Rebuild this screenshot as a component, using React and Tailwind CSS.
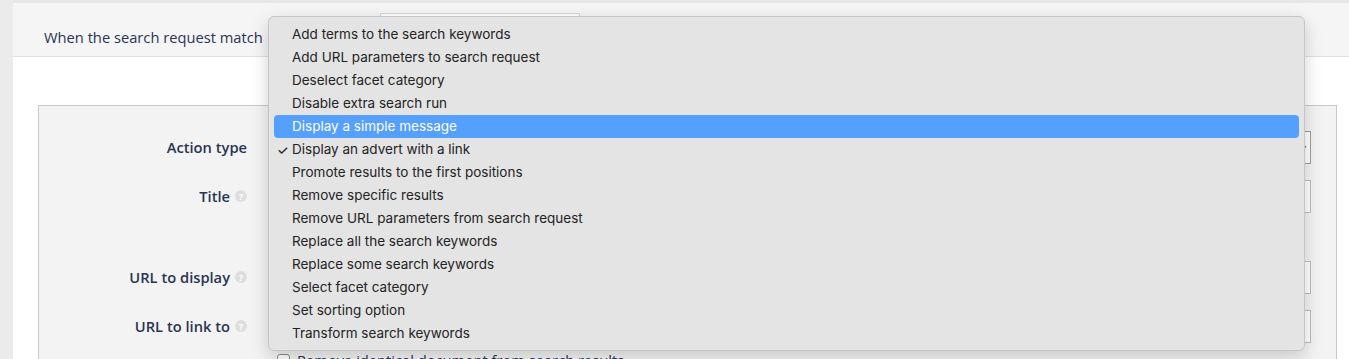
import React from 'react';

// Options of the "Action type" native select, shown open
const actions = [
  'Add terms to the search keywords',
  'Add URL parameters to search request',
  'Deselect facet category',
  'Disable extra search run',
  'Display a simple message',
  'Display an advert with a link',
  'Promote results to the first positions',
  'Remove specific results',
  'Remove URL parameters from search request',
  'Replace all the search keywords',
  'Replace some search keywords',
  'Select facet category',
  'Set sorting option',
  'Transform search keywords',
];

const highlighted = 'Display a simple message';
const checked = 'Display an advert with a link';

function Help() {
  return (
    <span className="ml-[5px] inline-flex h-[12px] w-[12px] items-center justify-center rounded-full bg-[#dedede] text-[9px] font-bold leading-none text-white">
      ?
    </span>
  );
}

function Row({ label, help, className = '', children }) {
  return (
    <div className={`flex items-center ${className}`}>
      <div className="flex w-[208px] shrink-0 items-center justify-end text-[14.7px] font-semibold text-[#2b3452]">
        {label}
        {help && <Help />}
      </div>
      <div className="ml-[23px] flex-1">{children}</div>
    </div>
  );
}

function Input() {
  return <div className="h-[33px] border border-[#bdbdbd] bg-white" />;
}

export default function App() {
  return (
    <div
      className="relative flex h-[359px] w-full overflow-hidden bg-[#ebebeb]"
      style={{ fontFamily: '"Open Sans", sans-serif' }}
    >
      <div className="w-[13px] shrink-0" />

      <div className="flex flex-1 flex-col bg-white">
        <div className="h-[3px] shrink-0 bg-[#e6e6e6]" />

        {/* Rule condition header */}
        <div className="flex h-[54px] shrink-0 items-start border-b border-[#e0e0e0] bg-[#f5f5f5]">
          <span className="ml-[31px] mt-[23px] text-[14.7px] text-[#2b3452]">
            When the search request match
          </span>
          <div className="ml-[117px] mt-[10px] h-[34px] w-[200px] border border-[#d4d4d4] bg-white" />
        </div>

        {/* Action panel */}
        <div className="ml-[25px] mr-[12px] mt-[48px] shrink-0 border border-b-0 border-[#c9c9c9] bg-[#f3f3f3] pb-[20px] pt-[25px]">
          <div className="mr-[25px]">
            <Row label="Action type">
              <div className="flex h-[33px] items-center justify-end border border-[#9e9e9e] bg-white pr-[4px] text-[10px] text-[#333]">
                ▾
              </div>
            </Row>
            <Row label="Title" help className="mt-[16px]">
              <Input />
            </Row>
            <Row label="URL to display" help className="mt-[48px]">
              <Input />
            </Row>
            <Row label="URL to link to" help className="mt-[16px]">
              <Input />
            </Row>
            <div className="ml-[238px] mt-[6px] flex items-center text-[14.7px] text-[#2b3452]">
              <span className="h-[13px] w-[13px] rounded-[3px] border border-[#8a8a8a] bg-white" />
              <span className="ml-[7px]">Remove identical document from search results</span>
            </div>
          </div>
        </div>
      </div>

      {/* Open select menu */}
      <div
        className="absolute left-[268px] top-[16px] w-[1037px] rounded-[6px] border border-[#c6c6c6] bg-[#e4e4e4] px-[5px] pb-[5px] pt-[6px] text-[13.5px] text-[#232323] shadow-[0_6px_18px_rgba(0,0,0,0.18)]"
        style={{ fontFamily: 'Inter, "Liberation Sans", sans-serif' }}
      >
        {actions.map((a) => (
          <div
            key={a}
            className={`relative flex h-[23px] items-center rounded-[4px] pl-[18px] ${
              a === highlighted ? 'bg-[#559ffd] text-white' : ''
            }`}
          >
            {a === checked && (
              <span className="absolute left-[3px] top-[3px] text-[13px] font-medium">✓</span>
            )}
            {a}
          </div>
        ))}
      </div>
    </div>
  );
}
